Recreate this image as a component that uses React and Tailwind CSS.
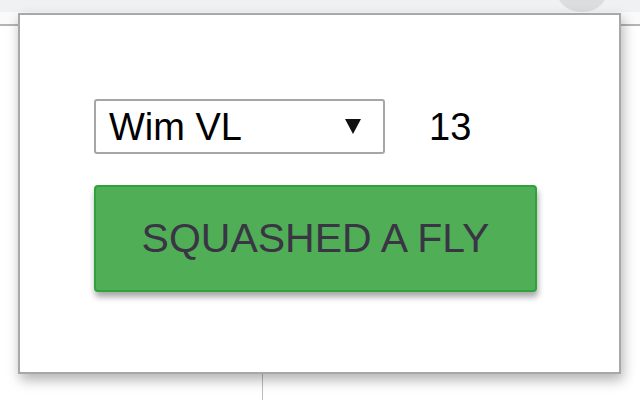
import React from "react";

export default function App() {
  return (
    <div className="relative w-[640px] h-[400px] overflow-hidden bg-white" style={{ fontFamily: '"Liberation Sans", Arial, sans-serif' }}>
      {/* browser chrome behind popup */}
      <div className="flex flex-col">
        <div className="h-[12px] bg-[#eff1f3]" />
        <div className="h-[12px] bg-[#fafafa]" />
        <div className="h-[2px] bg-[#b4b4b4]" />
        <div className="flex h-[374px]">
          <div className="w-[262px]" />
          <div className="w-[1px] h-full bg-[#bcbcbc]" />
        </div>
      </div>
      <div className="absolute left-[555px] top-[-40px] w-[54px] h-[52px] rounded-full bg-[#dcdddf]" />

      {/* popup */}
      <div className="absolute left-[18px] top-[13px] w-[603px] h-[361px] bg-white border-2 border-[#a8a8a8] shadow-[2px_6px_12px_rgba(0,0,0,0.3)] pl-[74px] pt-[84px]">
        <div className="flex items-center">
          <div className="w-[291px] h-[55px] border-2 border-[#a6a6a6] rounded-[3px] flex items-center justify-between pl-[13px] pr-[22px] text-[38px] text-black leading-none">
            <span>Wim VL</span>
            <svg width="16" height="15" viewBox="0 0 16 15"><path d="M0 0 H16 L8 15 Z" fill="#111" /></svg>
          </div>
          <span className="ml-[44px] text-[38px] text-black leading-none">13</span>
        </div>
        <button className="mt-[31px] w-[443px] h-[107px] bg-[#50ae56] border-2 border-[#2fa23b] rounded-[4px] shadow-[1px_5px_6px_rgba(0,0,0,0.35)] text-[41px] text-[#3a3545] leading-none flex items-center justify-center">
          SQUASHED A FLY
        </button>
      </div>
    </div>
  );
}
